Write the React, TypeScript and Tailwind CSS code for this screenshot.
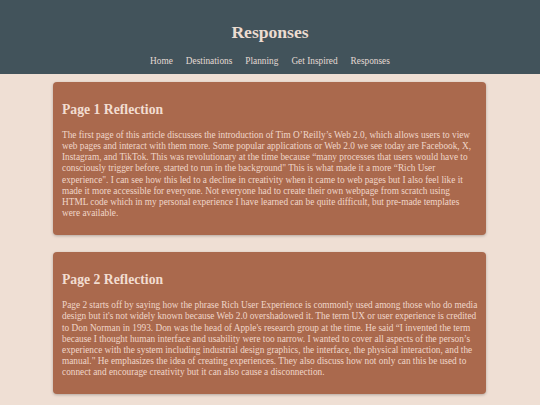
export default function App() {
  const nav = ["Home", "Destinations", "Planning", "Get Inspired", "Responses"];
  return (
    <div className="min-h-[405px] bg-[#efdfd4] font-['Liberation_Serif','Times_New_Roman',serif]">
      <header className="bg-[#42535b] h-[74px] flex flex-col items-center pt-[21px]">
        <h1 className="text-[17.6px] leading-[22px] font-bold text-[#ecdcd1]">Responses</h1>
        <nav className="flex gap-[13px] mt-[12px] text-[9.3px] leading-[12px] text-[#e4dad4]">
          {nav.map((n) => (
            <span key={n}>{n}</span>
          ))}
        </nav>
      </header>
      <main className="w-[433px] ml-[53px] pt-[8px] flex flex-col gap-[17px]">
        <section className="bg-[#aa694d] rounded-[4px] shadow-[0_1px_3px_rgba(0,0,0,0.25)] pl-[9px] pr-[8px] pt-[18px] pb-[16px]">
          <h2 className="text-[13.7px] leading-[20px] font-bold text-[#f2ddd1]">Page 1 Reflection</h2>
          <p className="mt-[10px] text-[9.3px] leading-[11.15px] text-[#f0d6c9]">
            The first page of this article discusses the introduction of Tim O’Reilly’s Web 2.0, which allows users to view web pages and interact with them more. Some popular applications or Web 2.0 we see today are Facebook, X, Instagram, and TikTok. This was revolutionary at the time because “many processes that users would have to consciously trigger before, started to run in the background" This is what made it a more “Rich User experience". I can see how this led to a decline in creativity when it came to web pages but I also feel like it made it more accessible for everyone. Not everyone had to create their own webpage from scratch using HTML code which in my personal experience I have learned can be quite difficult, but pre-made templates were available.
          </p>
        </section>
        <section className="bg-[#aa694d] rounded-[4px] shadow-[0_1px_3px_rgba(0,0,0,0.25)] pl-[9px] pr-[8px] pt-[18px] pb-[16px]">
          <h2 className="text-[13.7px] leading-[20px] font-bold text-[#f2ddd1]">Page 2 Reflection</h2>
          <p className="mt-[10px] text-[9.3px] leading-[11.15px] text-[#f0d6c9]">
            Page 2 starts off by saying how the phrase Rich User Experience is commonly used among those who do media design but it's not widely known because Web 2.0 overshadowed it. The term UX or user experience is credited to Don Norman in 1993. Don was the head of Apple's research group at the time. He said “I invented the term because I thought human interface and usability were too narrow. I wanted to cover all aspects of the person’s experience with the system including industrial design graphics, the interface, the physical interaction, and the manual." He emphasizes the idea of creating experiences. They also discuss how not only can this be used to connect and encourage creativity but it can also cause a disconnection.
          </p>
        </section>
      </main>
    </div>
  );
}
